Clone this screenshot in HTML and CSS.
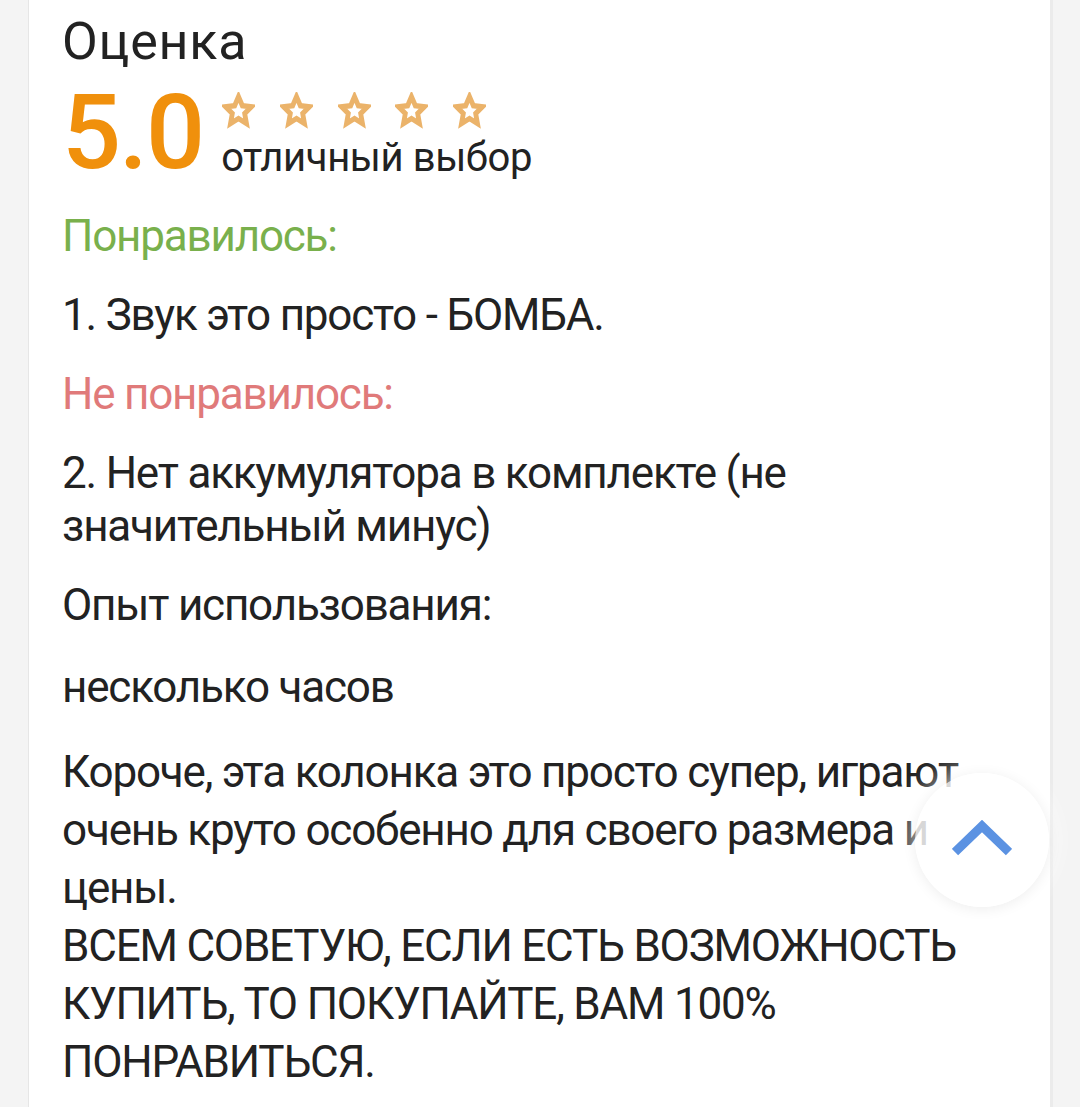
FILE: index.html
```html
<!DOCTYPE html>
<html lang="ru">
<head>
<meta charset="utf-8">
<link rel="stylesheet" href="styles.css">
</head>
<body>
<div class="page">
  <article class="card">
    <h2 class="title">Оценка</h2>
    <div class="rating">
      <div class="score">5.0</div>
      <div class="rating-side">
        <div class="stars">
          <svg class="star" viewBox="0 0 24 24" preserveAspectRatio="none"><path d="M12 3l2.8 5.9 6.5.7-4.8 4.4 1.3 6.5L12 17.2l-5.8 3.3 1.3-6.5-4.8-4.4 6.5-.7z"/></svg>
          <svg class="star" viewBox="0 0 24 24" preserveAspectRatio="none"><path d="M12 3l2.8 5.9 6.5.7-4.8 4.4 1.3 6.5L12 17.2l-5.8 3.3 1.3-6.5-4.8-4.4 6.5-.7z"/></svg>
          <svg class="star" viewBox="0 0 24 24" preserveAspectRatio="none"><path d="M12 3l2.8 5.9 6.5.7-4.8 4.4 1.3 6.5L12 17.2l-5.8 3.3 1.3-6.5-4.8-4.4 6.5-.7z"/></svg>
          <svg class="star" viewBox="0 0 24 24" preserveAspectRatio="none"><path d="M12 3l2.8 5.9 6.5.7-4.8 4.4 1.3 6.5L12 17.2l-5.8 3.3 1.3-6.5-4.8-4.4 6.5-.7z"/></svg>
          <svg class="star" viewBox="0 0 24 24" preserveAspectRatio="none"><path d="M12 3l2.8 5.9 6.5.7-4.8 4.4 1.3 6.5L12 17.2l-5.8 3.3 1.3-6.5-4.8-4.4 6.5-.7z"/></svg>
        </div>
        <div class="verdict">отличный выбор</div>
      </div>
    </div>
    <p class="label label-pro">Понравилось:</p>
    <p class="text">1. Звук это просто - БОМБА.</p>
    <p class="label label-con">Не понравилось:</p>
    <p class="text">2. Нет аккумулятора в комплекте (не значительный минус)</p>
    <p class="label">Опыт использования:</p>
    <p class="text text-usage">несколько часов</p>
    <p class="text text-comment">Короче, эта колонка это просто супер, играют очень круто особенно для своего размера и цены.<br>ВСЕМ СОВЕТУЮ, ЕСЛИ ЕСТЬ ВОЗМОЖНОСТЬ КУПИТЬ, ТО ПОКУПАЙТЕ, ВАМ 100% ПОНРАВИТЬСЯ.</p>
  </article>
  <button class="to-top" aria-label="Наверх">
    <svg viewBox="0 0 60 36"><path d="M3 32 L30 6 L57 32"/></svg>
  </button>
</div>
</body>
</html>
```

FILE: styles.css
```css
html, body {
  margin: 0;
  padding: 0;
  background: #f4f4f4;
}
body {
  font-family: Roboto, "Noto Sans", sans-serif;
  color: #222;
  overflow: hidden;
}
.page {
  position: relative;
  height: 1107px;
  padding: 0 27px 0 28px;
}
.card {
  background: #fff;
  border-left: 1px solid #e6e6e6;
  border-right: 3px solid #ebebeb;
  padding: 14px 30px 0 33px;
  min-height: 1107px;
  box-sizing: border-box;
}
.title {
  margin: 0;
  font-size: 52px;
  font-weight: 400;
  line-height: 56px;
  letter-spacing: 0.8px;
}
.rating {
  display: flex;
  align-items: flex-end;
  margin-top: 18px;
}
.score {
  font-size: 104px;
  font-weight: 500;
  color: #f0900c;
  line-height: 90px;
  letter-spacing: -2px;
}
.rating-side {
  margin-left: 18px;
  display: flex;
  flex-direction: column;
}
.stars {
  display: flex;
  gap: 24.7px;
  margin-left: 1px;
}
.star {
  width: 33px;
  height: 37px;
  fill: none;
  stroke: #ebb36a;
  stroke-width: 3.5;
  stroke-linejoin: miter;
  stroke-miterlimit: 6;
}
.verdict {
  font-size: 40px;
  line-height: 40px;
  margin-top: 9px;
  letter-spacing: -0.4px;
}
.label, .text {
  margin: 0;
  font-size: 44px;
  line-height: 53px;
  letter-spacing: -1.2px;
}
.label {
  margin-top: 26px;
}
.rating + .label {
  margin-top: 32px;
}
.text {
  margin-top: 26px;
}
.text-usage {
  margin-top: 29px;
}
.label-pro { color: #79b04c; }
.label-con { color: #e07a7a; }
.text-comment {
  line-height: 58px;
  margin-top: 29px;
}
.to-top {
  position: absolute;
  left: 915px;
  top: 773px;
  width: 134px;
  height: 134px;
  border-radius: 50%;
  border: none;
  padding: 0;
  background: rgba(255,255,255,0.82);
  box-shadow: 0 2px 14px rgba(0,0,0,0.07), 0 0 24px 6px rgba(255,255,255,0.7);
  display: flex;
  align-items: center;
  justify-content: center;
}
.to-top svg {
  width: 60px;
  height: 36px;
  fill: none;
  stroke: #5b92e2;
  stroke-width: 9;
  stroke-linecap: butt;
  stroke-linejoin: miter;
  margin-top: -4px;
}
```
